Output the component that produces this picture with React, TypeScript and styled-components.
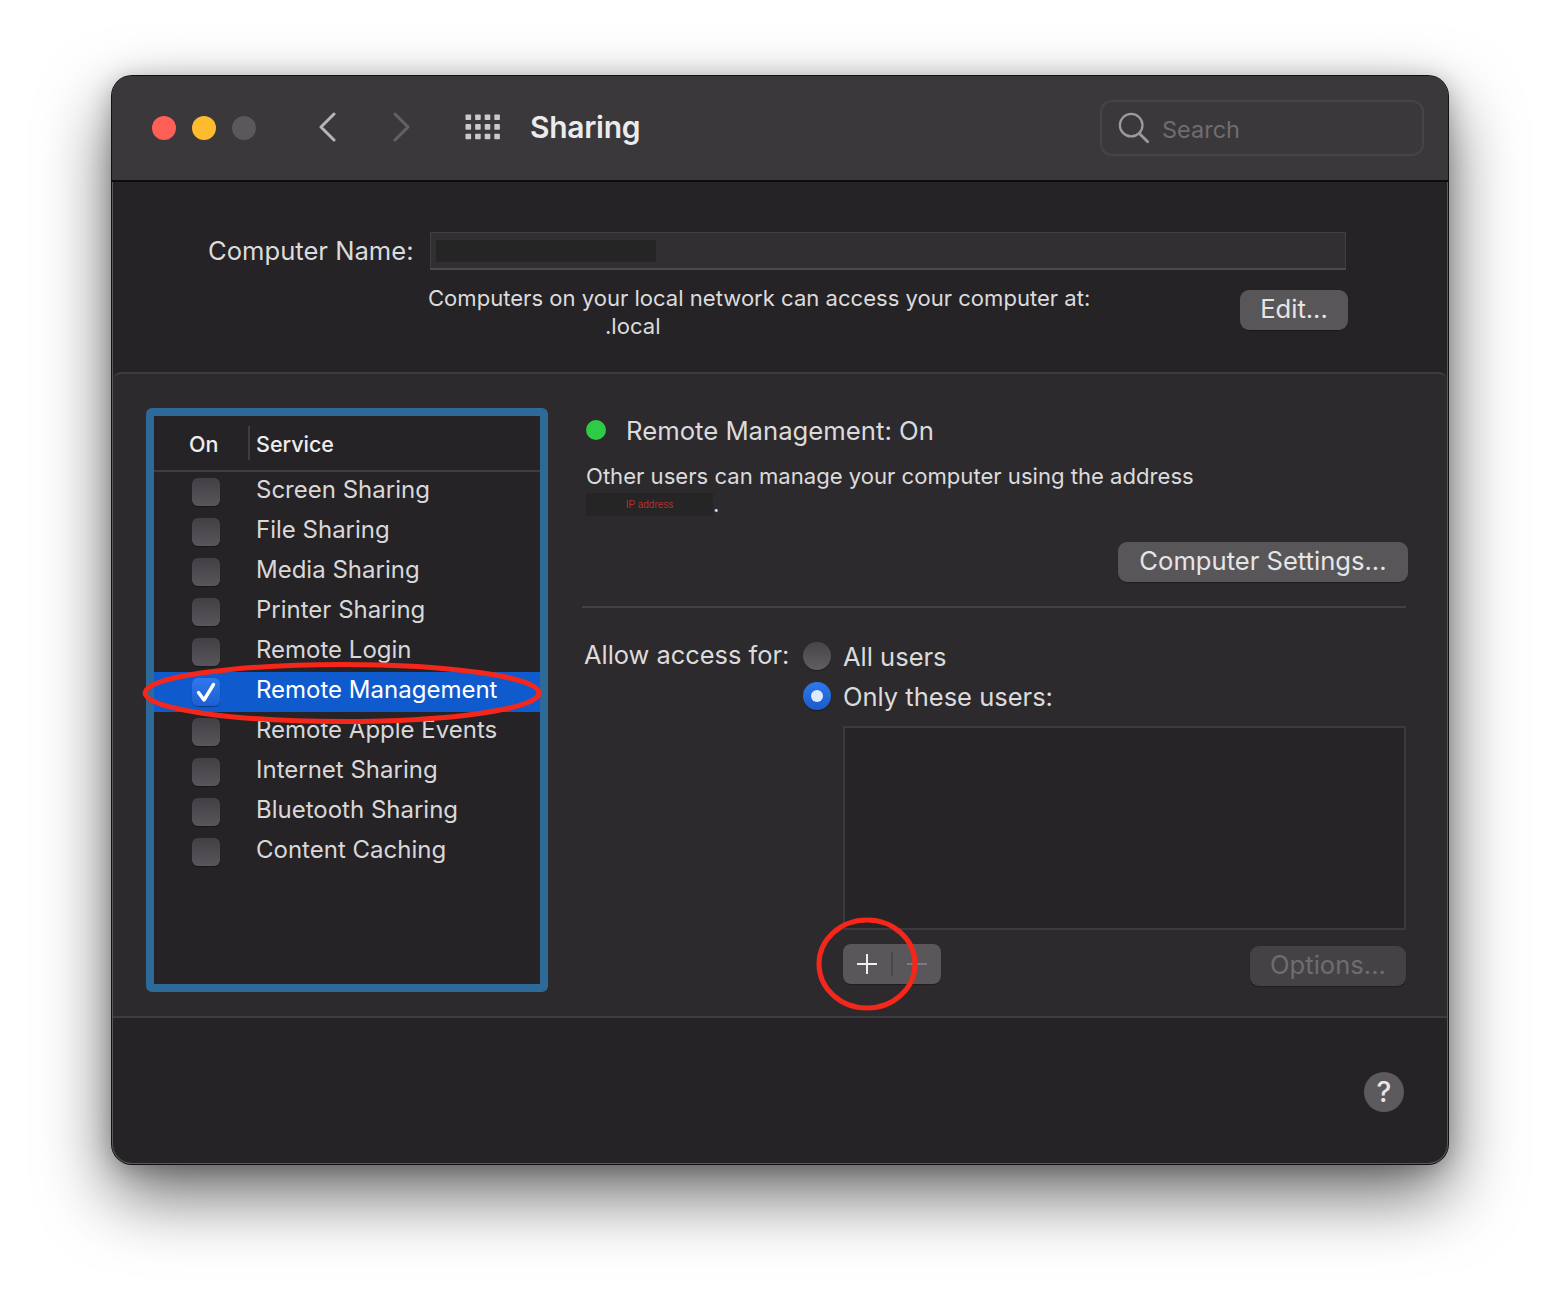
import * as React from 'react';
import styled, { createGlobalStyle } from 'styled-components';

const GlobalStyle = createGlobalStyle`
  html, body {
    margin: 0;
    padding: 0;
    background: #ffffff;
  }
  body {
    font-family: Inter, "Open Sans", "Liberation Sans", sans-serif;
    -webkit-font-smoothing: antialiased;
  }
`;

const Page = styled.div`
  width: 1560px;
  height: 1312px;
  padding: 76px 112px 0;
  box-sizing: border-box;
  overflow: hidden;
`;

const Window = styled.div`
  position: relative;
  width: 1336px;
  height: 1088px;
  box-sizing: border-box;
  border-radius: 20px;
  background: #262326;
  display: flex;
  flex-direction: column;
  overflow: hidden;
  box-shadow: 0 0 0 1px #111, inset 0 0 0 1px #5a585b, 0 30px 70px rgba(0, 0, 0, 0.6), 0 4px 24px rgba(0, 0, 0, 0.25);
`;

const TitleBar = styled.header`
  flex: none;
  height: 104px;
  box-sizing: content-box;
  border-bottom: 2px solid #0e0d0e;
  background: #3a383b;
  display: flex;
  align-items: center;
  padding: 0 24px 0 40px;
`;

const Lights = styled.div`
  display: flex;
  gap: 16px;
`;

const Light = styled.span<{ $color: string }>`
  width: 24px;
  height: 24px;
  border-radius: 50%;
  background: ${(p) => p.$color};
`;

const NavIcon = styled.svg`
  flex: none;
  display: block;
`;

const WindowTitle = styled.h1`
  margin: 0 0 2px 29px;
  font-size: 30px;
  font-weight: 600;
  letter-spacing: -0.3px;
  color: #ebebeb;
`;

const SearchBox = styled.div`
  margin-left: auto;
  width: 324px;
  height: 56px;
  box-sizing: border-box;
  border: 2px solid #464448;
  border-radius: 12px;
  display: flex;
  align-items: center;
  gap: 12px;
  padding: 0 0 0 16px;
  font-size: 23.5px;
  color: #6f6d71;
`;

const SearchLabel = styled.span`
  padding-top: 2px;
`;

const NameSection = styled.section`
  flex: none;
  height: 190px;
  box-sizing: border-box;
  padding: 50px 100px 0 96px;
`;

const NameRow = styled.div`
  display: flex;
  align-items: center;
  gap: 17px;
`;

const NameLabel = styled.label`
  width: 205px;
  margin-bottom: 2px;
  text-align: right;
  font-size: 25.6px;
  color: #dcdbdc;
  white-space: nowrap;
`;

const NameField = styled.div`
  width: 916px;
  height: 38px;
  box-sizing: border-box;
  background: #322f33;
  border: 1px solid #413f43;
  border-bottom: 2px solid #4b494d;
  padding: 7px 5px;
`;

const Redaction = styled.div<{ $w: number; $h: number }>`
  width: ${(p) => p.$w}px;
  height: ${(p) => p.$h}px;
  background: #252525;
`;

const AddressRow = styled.div`
  display: flex;
  margin: 14px 0 0 220px;
  justify-content: space-between;
`;

const AddressText = styled.p`
  margin: 0;
  font-size: 22.07px;
  line-height: 28px;
  color: #dcdbdc;
  text-align: left;
`;

const LocalLine = styled.span`
  display: block;
  padding-left: 177px;
`;

const PushButton = styled.button<{ $disabled?: boolean }>`
  flex: none;
  height: 40px;
  padding: 0 0 2px;
  border: none;
  border-radius: 9px;
  font-family: inherit;
  font-size: 25.6px;
  line-height: 36px;
  text-align: center;
  background: ${(p) => (p.$disabled ? '#454246' : '#59565a')};
  color: ${(p) => (p.$disabled ? '#6f6d71' : '#e6e5e6')};
  box-shadow: 0 1px 1px rgba(0, 0, 0, 0.3);
`;

const EditButton = styled(PushButton)`
  width: 108px;
  margin-top: 6px;
`;

const Panel = styled.section`
  flex: none;
  height: 646px;
  box-sizing: border-box;
  margin: 0 1px;
  background: #2d2a2e;
  border-top: 2px solid #3d3b3f;
  border-bottom: 2px solid #3d3b3f;
  border-radius: 8px 8px 0 0;
  padding: 34px 41px 0 33px;
  display: flex;
`;

const ServiceList = styled.div`
  flex: none;
  width: 402px;
  height: 584px;
  box-sizing: border-box;
  border: 8px solid #2d6a9a;
  border-radius: 6px;
  background: #262326;
  overflow: hidden;
`;

const ListHeader = styled.div`
  height: 56px;
  box-sizing: border-box;
  border-bottom: 2px solid #3f3d41;
  display: flex;
  align-items: center;
  font-size: 21.5px;
  font-weight: 500;
  color: #eeeeee;
`;

const OnColumn = styled.span`
  width: 96px;
  box-sizing: border-box;
  padding-left: 35px;
  height: 34px;
  line-height: 36px;
  border-right: 2px solid #3f3d41;
`;

const ServiceColumn = styled.span`
  padding-left: 6px;
  height: 34px;
  line-height: 36px;
`;

const ServiceRow = styled.div<{ $selected?: boolean }>`
  height: 40px;
  box-sizing: border-box;
  padding-bottom: 6px;
  display: flex;
  align-items: center;
  font-size: 24px;
  color: ${(p) => (p.$selected ? '#ffffff' : '#d9d8d9')};
  background: ${(p) => (p.$selected ? '#0f5bce' : 'transparent')};
`;

const CheckBox = styled.span<{ $checked?: boolean }>`
  flex: none;
  width: 28px;
  height: 28px;
  margin: 6px 36px 0 38px;
  border-radius: 6px;
  display: flex;
  align-items: center;
  justify-content: center;
  background: ${(p) =>
    p.$checked
      ? 'linear-gradient(#2f78ec, #1d5fd2)'
      : 'linear-gradient(#424044, #58565a)'};
  box-shadow: 0 1px 1px rgba(0, 0, 0, 0.35);
`;

const Detail = styled.div`
  flex: 1;
  margin-left: 34px;
  display: flex;
  flex-direction: column;
`;

const StatusRow = styled.div`
  display: flex;
  align-items: center;
  gap: 20px;
  padding: 5px 0 0 4px;
  height: 34px;
  font-size: 25.7px;
  color: #dcdbdc;
`;

const StatusDot = styled.span`
  width: 20px;
  height: 20px;
  border-radius: 50%;
  background: #2ecb47;
`;

const Description = styled.div`
  margin: 15px 0 0 4px;
  font-size: 22.1px;
  line-height: 28px;
  color: #dcdbdc;
`;

const IpLine = styled.div`
  display: flex;
  align-items: flex-end;
  margin-top: 2px;
  line-height: 24px;
`;

const IpMask = styled.span`
  width: 127px;
  height: 23px;
  background: #252525;
  color: #b5302f;
  font-family: "Liberation Sans", sans-serif;
  font-size: 10px;
  line-height: 23px;
  text-align: center;
`;

const SettingsButton = styled(PushButton)`
  width: 290px;
  margin: 26px -2px 0 auto;
`;

const Divider = styled.hr`
  width: 100%;
  margin: 24px 0 0;
  border: none;
  border-top: 2px solid #434145;
`;

const AccessGrid = styled.div`
  display: grid;
  grid-template-columns: 221px 1fr;
  margin-top: 33px;
`;

const AccessLabel = styled.div`
  margin-top: -2px;
  padding-left: 2px;
  font-size: 25.4px;
  line-height: 32px;
  color: #dcdbdc;
  white-space: nowrap;
`;

const RadioGroup = styled.div`
  display: flex;
  flex-direction: column;
  gap: 10px;
`;

const RadioRow = styled.div`
  display: flex;
  align-items: center;
  gap: 12px;
  height: 30px;
  font-size: 25.5px;
  color: #dcdbdc;
`;

const Radio = styled.span<{ $on?: boolean }>`
  flex: none;
  width: 28px;
  height: 28px;
  border-radius: 50%;
  display: flex;
  align-items: center;
  justify-content: center;
  background: ${(p) => (p.$on ? 'linear-gradient(#2f78ec, #1a5ccb)' : 'linear-gradient(#47454a, #605e62)')};
  box-shadow: 0 1px 1px rgba(0, 0, 0, 0.35);
`;

const RadioPip = styled.span`
  width: 12px;
  height: 12px;
  border-radius: 50%;
  background: #dfe9fb;
`;

const UserBox = styled.div`
  height: 204px;
  box-sizing: border-box;
  margin: 15px 0 0 261px;
  border: 2px solid #3b3a3e;
  background: #272428;
`;

const ListControls = styled.div`
  display: flex;
  justify-content: space-between;
  align-items: flex-start;
  margin: 14px 0 0 261px;
`;

const PlusMinus = styled.div`
  width: 98px;
  height: 40px;
  border-radius: 8px;
  background: #5a575b;
  display: flex;
  align-items: center;
  box-shadow: 0 1px 1px rgba(0, 0, 0, 0.3);
`;

const Segment = styled.span`
  flex: 1;
  height: 100%;
  display: flex;
  align-items: center;
  justify-content: center;
`;

const SegmentRule = styled.span`
  flex: none;
  width: 2px;
  height: 24px;
  background: #4a484c;
`;

const OptionsButton = styled(PushButton)`
  width: 156px;
  margin-top: 2px;
`;

const Footer = styled.footer`
  flex: 1;
  display: flex;
  justify-content: flex-end;
  padding: 54px 44px 0 0;
`;

const HelpButton = styled.button`
  width: 40px;
  height: 40px;
  padding: 0;
  border: none;
  border-radius: 50%;
  background: #5c5a5e;
  color: #e8e7e8;
  font-family: inherit;
  font-size: 28px;
  font-weight: 500;
  line-height: 40px;
  text-align: center;
`;

const Annotations = styled.svg`
  position: absolute;
  left: 0;
  top: 0;
  width: 1336px;
  height: 1088px;
  pointer-events: none;
`;

const services = [
  'Screen Sharing',
  'File Sharing',
  'Media Sharing',
  'Printer Sharing',
  'Remote Login',
  'Remote Management',
  'Remote Apple Events',
  'Internet Sharing',
  'Bluetooth Sharing',
  'Content Caching',
];

const Chevron = ({ dir, color, ml }: { dir: 'l' | 'r'; color: string; ml: number }) => (
  <NavIcon width="18" height="30" viewBox="0 0 18 30" style={{ marginLeft: ml, marginBottom: 2 }}>
    <path
      d={dir === 'l' ? 'M16 2 L3 15 L16 28' : 'M2 2 L15 15 L2 28'}
      fill="none"
      stroke={color}
      strokeWidth="3"
      strokeLinecap="round"
      strokeLinejoin="round"
    />
  </NavIcon>
);

const GridIcon = () => (
  <NavIcon width="36" height="26" viewBox="0 0 36 26" style={{ marginLeft: 54, marginBottom: 2 }}>
    {[0, 1, 2].map((r) =>
      [0, 1, 2, 3].map((c) => (
        <rect key={`${r}-${c}`} x={c * 9.6 + 0.5} y={r * 9.6 + 0.5} width="5.6" height="5.6" rx="0.8" fill="#c9c8ca" />
      ))
    )}
  </NavIcon>
);

export default function App() {
  return (
    <Page>
      <GlobalStyle />
      <Window>
        <TitleBar>
          <Lights>
            <Light $color="#fe5f57" />
            <Light $color="#febb2e" />
            <Light $color="#5a585c" />
          </Lights>
          <Chevron dir="l" color="#b5b4b6" ml={62} />
          <Chevron dir="r" color="#636165" ml={57} />
          <GridIcon />
          <WindowTitle>Sharing</WindowTitle>
          <SearchBox>
            <svg width="32" height="32" viewBox="0 0 34 34">
              <circle cx="14" cy="14" r="12" fill="none" stroke="#9b9a9c" strokeWidth="2.4" />
              <path d="M23 23 L31.5 31.5" stroke="#9b9a9c" strokeWidth="3" strokeLinecap="round" />
            </svg>
            <SearchLabel>Search</SearchLabel>
          </SearchBox>
        </TitleBar>

        <NameSection>
          <NameRow>
            <NameLabel>Computer Name:</NameLabel>
            <NameField>
              <Redaction $w={220} $h={22} />
            </NameField>
          </NameRow>
          <AddressRow>
            <AddressText>
              Computers on your local network can access your computer at:
              <LocalLine>.local</LocalLine>
            </AddressText>
            <EditButton>Edit...</EditButton>
          </AddressRow>
        </NameSection>

        <Panel>
          <ServiceList>
            <ListHeader>
              <OnColumn>On</OnColumn>
              <ServiceColumn>Service</ServiceColumn>
            </ListHeader>
            {services.map((name) => {
              const selected = name === 'Remote Management';
              return (
                <ServiceRow key={name} $selected={selected}>
                  <CheckBox $checked={selected}>
                    {selected && (
                      <svg width="22" height="22" viewBox="0 0 22 22">
                        <path
                          d="M3.5 11.5 L9 19 L18.5 3.5"
                          fill="none"
                          stroke="#fff"
                          strokeWidth="3.4"
                          strokeLinecap="round"
                          strokeLinejoin="round"
                        />
                      </svg>
                    )}
                  </CheckBox>
                  {name}
                </ServiceRow>
              );
            })}
          </ServiceList>

          <Detail>
            <StatusRow>
              <StatusDot />
              Remote Management: On
            </StatusRow>
            <Description>
              Other users can manage your computer using the address
              <IpLine>
                <IpMask>IP address</IpMask>.
              </IpLine>
            </Description>
            <SettingsButton>Computer Settings...</SettingsButton>
            <Divider />
            <AccessGrid>
              <AccessLabel>Allow access for:</AccessLabel>
              <RadioGroup>
                <RadioRow>
                  <Radio />
                  All users
                </RadioRow>
                <RadioRow>
                  <Radio $on>
                    <RadioPip />
                  </Radio>
                  Only these users:
                </RadioRow>
              </RadioGroup>
            </AccessGrid>
            <UserBox />
            <ListControls>
              <PlusMinus>
                <Segment>
                  <svg width="22" height="22" viewBox="0 0 22 22">
                    <path d="M11 1 V21 M1 11 H21" stroke="#efeeef" strokeWidth="2" />
                  </svg>
                </Segment>
                <SegmentRule />
                <Segment>
                  <svg width="22" height="22" viewBox="0 0 22 22">
                    <path d="M1 11 H21" stroke="#7d7b7f" strokeWidth="2" />
                  </svg>
                </Segment>
              </PlusMinus>
              <OptionsButton $disabled>Options...</OptionsButton>
            </ListControls>
          </Detail>
        </Panel>

        <Footer>
          <HelpButton>?</HelpButton>
        </Footer>

        <Annotations viewBox="0 0 1336 1088">
          <ellipse cx="230" cy="617" rx="197" ry="28.5" fill="none" stroke="#f5271b" strokeWidth="5" />
          <ellipse cx="755" cy="888" rx="48" ry="44" fill="none" stroke="#f5271b" strokeWidth="5" />
        </Annotations>
      </Window>
    </Page>
  );
}
